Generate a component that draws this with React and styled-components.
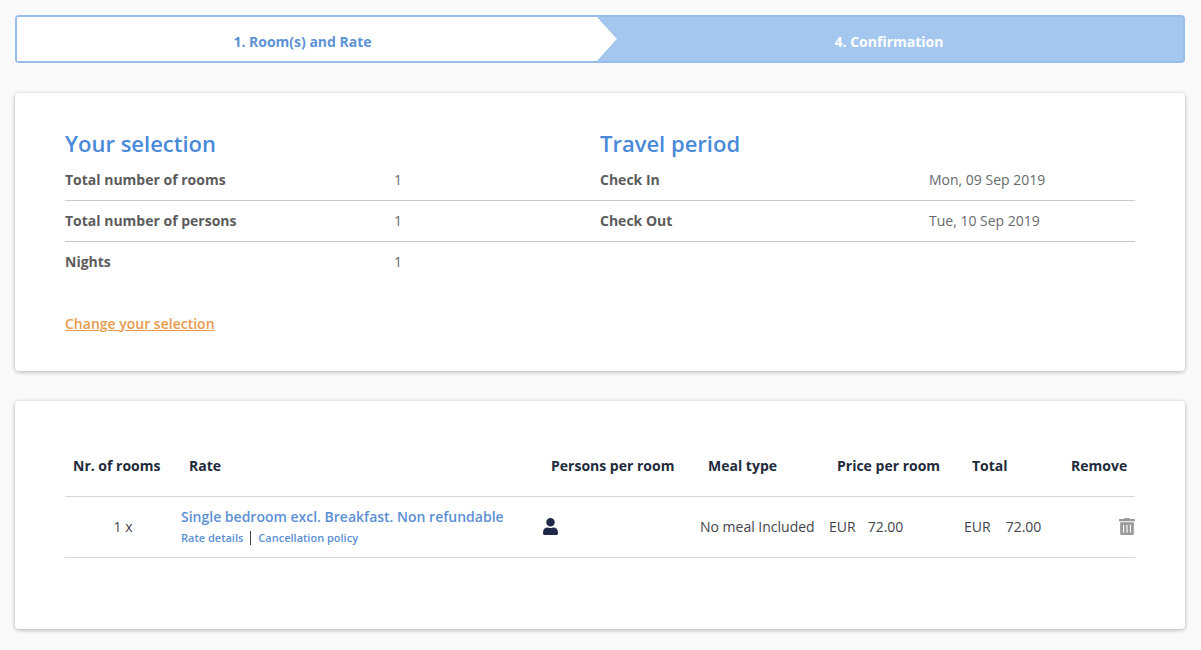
import React from 'react';
import styled, { createGlobalStyle } from 'styled-components';
import { FaUser, FaTrashAlt } from 'react-icons/fa';

const GlobalStyle = createGlobalStyle`
	html, body {
		margin: 0;
		background: #f8fafc;
		font-family: "Open Sans", "Liberation Sans", sans-serif;
		font-size: 14px;
		color: #54595f;
	}
`;

const COLUMNS = '116px 362px 157px 129px 135px 99px 72px';

const Page = styled.div`
	display: flex;
	flex-direction: column;
	gap: 30px;
	width: 1170px;
	padding: 15px 15px 20px;
`;

const Stepper = styled.div`
	display: flex;
	height: 48px;
	box-sizing: border-box;
	border: 2px solid #98bde8;
	border-radius: 4px;
	background: #a4c7f0;
`;

const Step = styled.div`
	position: relative;
	display: flex;
	align-items: center;
	justify-content: center;
	flex: 0 0 ${(p) => p.$width}px;
	padding: 4px ${(p) => p.$shift}px 0 0;
	box-sizing: border-box;
	font-size: 14px;
	font-weight: 700;
	color: ${(p) => (p.$active ? '#5e92d6' : '#ffffff')};
	background: ${(p) => (p.$active ? '#ffffff' : 'transparent')};

	${(p) => p.$active && `
		&::before, &::after {
			content: "";
			position: absolute;
			top: 0;
			left: 100%;
			width: 20px;
			height: 44px;
			clip-path: polygon(0 0, 100% 50%, 0 100%);
		}
		&::before {
			margin-left: 1px;
			background: #98bde8;
		}
		&::after {
			background: #ffffff;
		}
	`}
`;

const Card = styled.section`
	box-sizing: border-box;
	height: ${(p) => p.$height}px;
	padding: ${(p) => p.$padding};
	background: #ffffff;
	border-radius: 4px;
	box-shadow: 0 1px 4px rgba(0, 0, 0, 0.3);
`;

const Columns = styled.div`
	display: grid;
	grid-template-columns: 535px 535px;
`;

const Title = styled.h2`
	margin: 0;
	padding-bottom: 2px;
	height: 32px;
	box-sizing: border-box;
	font-size: 22px;
	line-height: 30px;
	font-weight: 600;
	color: #4a89d8;
`;

const InfoRow = styled.div`
	display: grid;
	grid-template-columns: 329px 1fr;
	align-items: center;
	height: 41px;
	padding-bottom: 2px;
	box-sizing: border-box;
	border-bottom: ${(p) => (p.$last ? 'none' : '1px solid #c9c9c9')};
`;

const InfoLabel = styled.span`
	font-weight: 700;
	color: #5c5c5c;
`;

const InfoValue = styled.span`
	color: #666a6e;
`;

const ChangeLink = styled.a`
	display: inline-block;
	margin-top: 31px;
	color: #e89a4b;
	font-weight: 600;
	text-decoration: underline;
`;

const TableHead = styled.div`
	display: grid;
	grid-template-columns: ${COLUMNS};
	align-items: center;
	box-sizing: border-box;
	height: 71px;
	padding-top: 8px;
	border-bottom: 1px solid #d6d6d6;
`;

const HeadCell = styled.div`
	padding: 0 8px;
	font-weight: 700;
	color: #222b3c;
	white-space: nowrap;
	text-align: ${(p) => p.$align || 'left'};
`;

const TableRow = styled.div`
	display: grid;
	grid-template-columns: ${COLUMNS};
	align-items: center;
	box-sizing: border-box;
	height: 61px;
	padding-bottom: 2px;
	border-bottom: 1px solid #d6d6d6;
`;

const Cell = styled.div`
	display: flex;
	align-items: center;
	justify-content: ${(p) => p.$justify || 'flex-start'};
	white-space: nowrap;
	color: #3f444b;
`;

const RateName = styled.a`
	display: block;
	font-weight: 600;
	color: #5b8fd4;
	line-height: 20px;
`;

const RateLinks = styled.div`
	display: flex;
	align-items: center;
	margin-top: 3px;
	font-size: 11px;
	font-weight: 600;
	color: #5b8fd4;
`;

const Separator = styled.span`
	width: 1px;
	height: 14px;
	margin: 0 7px 0 7px;
	background: #3f444b;
`;

const Price = styled.span`
	display: inline-flex;
	gap: ${(p) => p.$gap}px;
`;

const PersonIcon = styled(FaUser)`
	width: 15px;
	height: 17px;
	color: #1f2a4a;
`;

const TrashIcon = styled(FaTrashAlt)`
	width: 16px;
	height: 17px;
	color: #98999b;
`;

export default function App() {
	return (
		<Page>
			<GlobalStyle />
			<Stepper>
				<Step $active $width={580} $shift={9}>1. Room(s) and Rate</Step>
				<Step $width={586} $shift={2}>4. Confirmation</Step>
			</Stepper>
			<Card $height={278} $padding="35px 50px">
				<Columns>
					<div>
						<Title>Your selection</Title>
						<InfoRow><InfoLabel>Total number of rooms</InfoLabel><InfoValue>1</InfoValue></InfoRow>
						<InfoRow><InfoLabel>Total number of persons</InfoLabel><InfoValue>1</InfoValue></InfoRow>
						<InfoRow $last><InfoLabel>Nights</InfoLabel><InfoValue>1</InfoValue></InfoRow>
						<ChangeLink>Change your selection</ChangeLink>
					</div>
					<div>
						<Title>Travel period</Title>
						<InfoRow><InfoLabel>Check In</InfoLabel><InfoValue>Mon, 09 Sep 2019</InfoValue></InfoRow>
						<InfoRow><InfoLabel>Check Out</InfoLabel><InfoValue>Tue, 10 Sep 2019</InfoValue></InfoRow>
					</div>
				</Columns>
			</Card>
			<Card $height={228} $padding="25px 50px">
				<TableHead>
					<HeadCell>Nr. of rooms</HeadCell>
					<HeadCell>Rate</HeadCell>
					<HeadCell>Persons per room</HeadCell>
					<HeadCell>Meal type</HeadCell>
					<HeadCell>Price per room</HeadCell>
					<HeadCell>Total</HeadCell>
					<HeadCell $align="right">Remove</HeadCell>
				</TableHead>
				<TableRow>
					<Cell $justify="center">1 x</Cell>
					<div>
						<RateName>Single bedroom excl. Breakfast. Non refundable</RateName>
						<RateLinks>Rate details<Separator />Cancellation policy</RateLinks>
					</div>
					<Cell><PersonIcon /></Cell>
					<Cell>No meal Included</Cell>
					<Cell><Price $gap={12}><span>EUR</span><span>72.00</span></Price></Cell>
					<Cell><Price $gap={15}><span>EUR</span><span>72.00</span></Price></Cell>
					<Cell $justify="flex-end"><TrashIcon preserveAspectRatio="none" /></Cell>
				</TableRow>
			</Card>
		</Page>
	);
}
